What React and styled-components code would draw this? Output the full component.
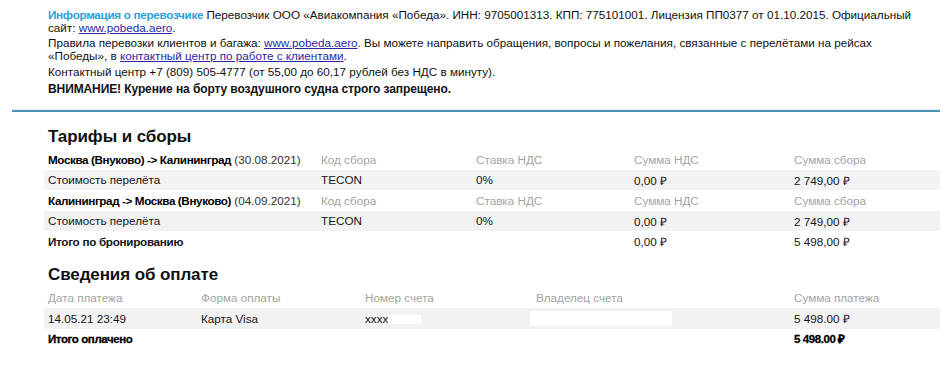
import React from "react";
import styled, { createGlobalStyle } from "styled-components";

const Global = createGlobalStyle`
  html, body { margin: 0; padding: 0; background: #fff; }
  body {
    font-family: "Liberation Sans", Arial, sans-serif;
    color: #111;
    width: 948px;
    height: 384px;
    overflow: hidden;
  }
`;

const Page = styled.div`
  width: 948px;
  display: flex;
  flex-direction: column;
`;

const Info = styled.section`
  padding: 8px 0 0 48px;
  display: flex;
  flex-direction: column;
  font-size: 11.7px;
  line-height: 13px;
  color: #111;
`;

const Para = styled.p`
  margin: 0 0 ${(p) => p.$gap || 0}px 0;
  white-space: nowrap;
  font-weight: ${(p) => (p.$bold ? 700 : 400)};
  font-size: ${(p) => (p.$bold ? "12px" : "inherit")};
  letter-spacing: ${(p) => (p.$bold ? "-0.1px" : "0")};
`;

const Accent = styled.b`
  color: #2a9fd8;
  font-weight: 700;
  letter-spacing: -0.3px;
`;

const Link = styled.a`
  color: #2a27a6;
  text-decoration: underline;
`;

const Divider = styled.div`
  margin: 13px 8px 0 12px;
  height: 3px;
  background: linear-gradient(#dcf5fc 0 1px, #4d93b3 1px 3px);
`;

const Section = styled.section`
  padding: 0 8px 0 44px;
  display: flex;
  flex-direction: column;
`;

const Title = styled.h2`
  margin: ${(p) => p.$top}px 0 ${(p) => p.$bottom}px 4px;
  font-size: 17px;
  line-height: 22px;
  font-weight: 700;
  letter-spacing: -0.1px;
  color: #111;
`;

const Row = styled.div`
  display: grid;
  grid-template-columns: ${(p) => p.$cols};
  height: 20.5px;
  align-items: center;
  background: ${(p) => (p.$shade ? "#f2f2f2" : "transparent")};
  font-size: 11.7px;
`;

const Cell = styled.div`
  padding-left: 4px;
  white-space: nowrap;
  color: ${(p) => (p.$muted ? "#a3a3a3" : "#151515")};
  font-weight: ${(p) => (p.$bold ? 700 : 400)};
  letter-spacing: ${(p) => (p.$heavy ? "-0.4px" : p.$bold ? "-0.3px" : "0")};
  ${(p) => p.$heavy && "font-size: 11.5px; -webkit-text-stroke: 0.3px #000; color: #000;"}
`;

const Route = styled.b`
  font-weight: 700;
  letter-spacing: -0.4px;
  color: #000;
`;

const Date = styled.span`
  color: #333;
`;

const Mask = styled.span`
  display: inline-block;
  vertical-align: middle;
  width: ${(p) => p.$w}px;
  height: ${(p) => p.$h}px;
  margin-left: ${(p) => p.$ml || 0}px;
  background: #fff;
`;

const TARIFF_COLS = "273px 155px 158px 160px 1fr";
const PAY_COLS = "153px 164px 171px 258px 1fr";

const legs = [
  { route: "Москва (Внуково) -> Калининград", date: "(30.08.2021)" },
  { route: "Калининград -> Москва (Внуково)", date: "(04.09.2021)" },
];

export default function App() {
  return (
    <Page>
      <Global />
      <Info>
        <Para $gap={2}>
          <Accent>Информация о перевозчике</Accent> Перевозчик ООО «Авиакомпания «Победа». ИНН: 9705001313. КПП: 775101001. Лицензия ПП0377 от 01.10.2015. Официальный
          <br />
          сайт: <Link href="#">www.pobeda.aero</Link>.
        </Para>
        <Para $gap={3}>
          Правила перевозки клиентов и багажа: <Link href="#">www.pobeda.aero</Link>. Вы можете направить обращения, вопросы и пожелания, связанные с перелётами на рейсах
          <br />
          «Победы», в <Link href="#">контактный центр по работе с клиентами</Link>.
        </Para>
        <Para $gap={5}>Контактный центр +7 (809) 505-4777 (от 55,00 до 60,17 рублей без НДС в минуту).</Para>
        <Para $bold>ВНИМАНИЕ! Курение на борту воздушного судна строго запрещено.</Para>
      </Info>

      <Divider />

      <Section>
        <Title $top={14} $bottom={1}>Тарифы и сборы</Title>
        {legs.map((leg) => (
          <React.Fragment key={leg.date}>
            <Row $cols={TARIFF_COLS}>
              <Cell>
                <Route>{leg.route}</Route> <Date>{leg.date}</Date>
              </Cell>
              <Cell $muted>Код сбора</Cell>
              <Cell $muted>Ставка НДС</Cell>
              <Cell $muted>Сумма НДС</Cell>
              <Cell $muted>Сумма сбора</Cell>
            </Row>
            <Row $cols={TARIFF_COLS} $shade>
              <Cell>Стоимость перелёта</Cell>
              <Cell>TECON</Cell>
              <Cell>0%</Cell>
              <Cell>0,00 ₽</Cell>
              <Cell>2 749,00 ₽</Cell>
            </Row>
          </React.Fragment>
        ))}
        <Row $cols={TARIFF_COLS}>
          <Cell $bold>Итого по бронированию</Cell>
          <Cell />
          <Cell />
          <Cell>0,00 ₽</Cell>
          <Cell>5 498,00 ₽</Cell>
        </Row>

        <Title $top={12} $bottom={2}>Сведения об оплате</Title>
        <Row $cols={PAY_COLS}>
          <Cell $muted>Дата платежа</Cell>
          <Cell $muted>Форма оплаты</Cell>
          <Cell $muted>Номер счета</Cell>
          <Cell $muted>Владелец счета</Cell>
          <Cell $muted>Сумма платежа</Cell>
        </Row>
        <Row $cols={PAY_COLS} $shade>
          <Cell>14.05.21 23:49</Cell>
          <Cell>Карта Visa</Cell>
          <Cell>
            xxxx<Mask $w={33} $h={9} />
          </Cell>
          <Cell>
            <Mask $w={142} $h={15} $ml={-6} />
          </Cell>
          <Cell>5 498.00 ₽</Cell>
        </Row>
        <Row $cols={PAY_COLS}>
          <Cell $heavy $bold>Итого оплачено</Cell>
          <Cell />
          <Cell />
          <Cell />
          <Cell $heavy $bold>5 498.00 ₽</Cell>
        </Row>
      </Section>
    </Page>
  );
}
